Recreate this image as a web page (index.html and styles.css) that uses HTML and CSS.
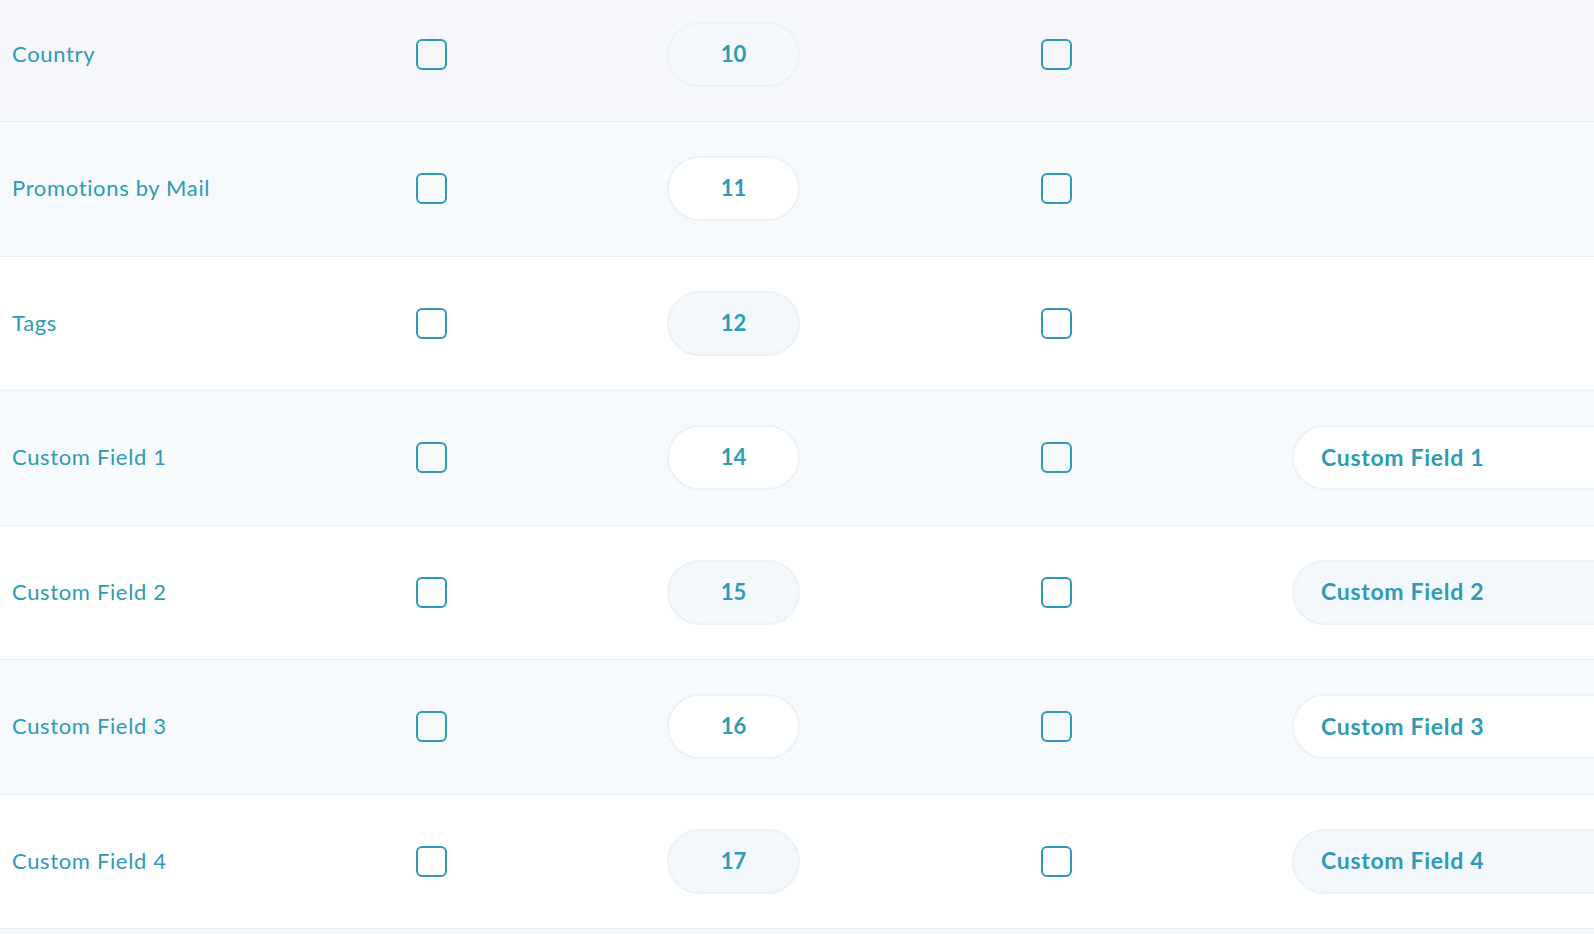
FILE: index.html
```html
<!DOCTYPE html>
<html>
<head>
    <link rel="stylesheet" href="styles.css">
</head>
<body>
    <div class="fields">
        <div class="field-row is-hover">
            <div class="field-name">Country</div>
            <div class="cell"><span class="check"></span></div>
            <div class="cell"><span class="pill">10</span></div>
            <div class="cell"><span class="check"></span></div>
            <div class="cell"></div>
        </div>
        <div class="field-row alt">
            <div class="field-name">Promotions by Mail</div>
            <div class="cell"><span class="check"></span></div>
            <div class="cell"><span class="pill">11</span></div>
            <div class="cell"><span class="check"></span></div>
            <div class="cell"></div>
        </div>
        <div class="field-row">
            <div class="field-name">Tags</div>
            <div class="cell"><span class="check"></span></div>
            <div class="cell"><span class="pill">12</span></div>
            <div class="cell"><span class="check"></span></div>
            <div class="cell"></div>
        </div>
        <div class="field-row alt">
            <div class="field-name">Custom Field 1</div>
            <div class="cell"><span class="check"></span></div>
            <div class="cell"><span class="pill">14</span></div>
            <div class="cell"><span class="check"></span></div>
            <div class="cell"><span class="label-input">Custom Field 1</span></div>
        </div>
        <div class="field-row">
            <div class="field-name">Custom Field 2</div>
            <div class="cell"><span class="check"></span></div>
            <div class="cell"><span class="pill">15</span></div>
            <div class="cell"><span class="check"></span></div>
            <div class="cell"><span class="label-input">Custom Field 2</span></div>
        </div>
        <div class="field-row alt">
            <div class="field-name">Custom Field 3</div>
            <div class="cell"><span class="check"></span></div>
            <div class="cell"><span class="pill">16</span></div>
            <div class="cell"><span class="check"></span></div>
            <div class="cell"><span class="label-input">Custom Field 3</span></div>
        </div>
        <div class="field-row">
            <div class="field-name">Custom Field 4</div>
            <div class="cell"><span class="check"></span></div>
            <div class="cell"><span class="pill">17</span></div>
            <div class="cell"><span class="check"></span></div>
            <div class="cell"><span class="label-input">Custom Field 4</span></div>
        </div>
        <div class="field-row alt"></div>
    </div>
</body>
</html>
```
FILE: styles.css
```css
body {
    margin: 0;
    background: #fff;
    overflow: hidden;
    font-family: Lato, "Open Sans", Arial, sans-serif;
    color: #2e9ab5;
}
.fields {
    margin-top: -12.5px;
    width: 1800px;
}
.field-row {
    display: grid;
    grid-template-columns: 416px 251px 374px 251px 1fr;
    align-items: center;
    box-sizing: border-box;
    height: 134.5px;
    border-bottom: 1px solid #e8eef3;
    background: #fff;
}
.field-row.alt {
    background: #f6fafd;
}
.field-row.is-hover {
    background: #f5f7fa;
}
.field-name {
    padding-left: 12px;
    padding-bottom: 2px;
    font-size: 22px;
    letter-spacing: 0.65px;
}
.cell {
    display: flex;
    align-items: center;
}
.check {
    display: block;
    box-sizing: border-box;
    width: 31px;
    height: 31px;
    border: 2px solid #2e9ab5;
    border-radius: 6px;
}
.pill,
.label-input {
    display: flex;
    align-items: center;
    box-sizing: border-box;
    height: 65px;
    padding-bottom: 2px;
    border: 2px solid #ebf3f8;
    border-radius: 33px;
    background: #f3f8fc;
    font-weight: 700;
}
.pill {
    justify-content: center;
    width: 133px;
    font-size: 22px;
}
.label-input {
    width: 420px;
    padding-left: 27px;
    font-size: 23px;
    letter-spacing: 0.7px;
}
.field-row.alt .pill,
.field-row.alt .label-input {
    background: #fff;
}
.field-row.is-hover .pill {
    background: #f3f8fc;
}
```
